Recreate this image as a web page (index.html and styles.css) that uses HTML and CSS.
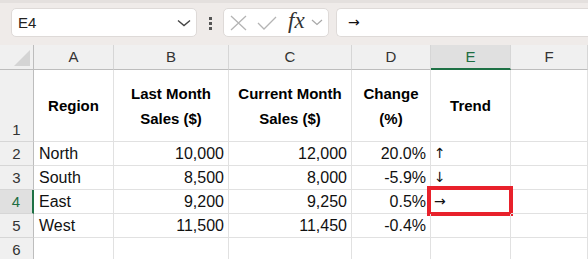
FILE: index.html
```html
<!DOCTYPE html>
<html lang="en">
<head>
<meta charset="utf-8"/>
<title>Sales Trend</title>
<link rel="stylesheet" href="styles.css">
</head>
<body>
<div class="formula-bar">
  <div class="name-box">
    <span>E4</span>
    <svg width="14" height="8" viewBox="0 0 14 8"><path d="M1 1.5 L7 6.5 L13 1.5" fill="none" stroke="#444" stroke-width="1.4"/></svg>
  </div>
  <div class="dots"><i></i><i></i><i></i></div>
  <div class="fx-box">
    <svg width="17" height="16" viewBox="0 0 17 16"><path d="M1 1 L16 15 M16 1 L1 15" stroke="#b4b4b4" stroke-width="1.3"/></svg>
    <svg width="20" height="14" viewBox="0 0 20 14"><path d="M1 7 L7 13 L19 1" fill="none" stroke="#b4b4b4" stroke-width="1.3"/></svg>
    <span class="fx">fx</span>
    <svg width="12" height="7" viewBox="0 0 12 7"><path d="M1 1 L6 5.5 L11 1" fill="none" stroke="#a8a8a8" stroke-width="1.2"/></svg>
  </div>
  <div class="formula-input">→</div>
</div>

<div class="sheet">
  <div class="corner"><span class="tri"></span></div>
  <div class="col-head">A</div>
  <div class="col-head">B</div>
  <div class="col-head">C</div>
  <div class="col-head">D</div>
  <div class="col-head active">E</div>
  <div class="col-head">F</div>

  <div class="row-head tall">1</div>
  <div class="cell head">Region</div>
  <div class="cell head">Last Month<br>Sales ($)</div>
  <div class="cell head">Current Month<br>Sales ($)</div>
  <div class="cell head">Change<br>(%)</div>
  <div class="cell head">Trend</div>
  <div class="cell"></div>

  <div class="row-head">2</div>
  <div class="cell">North</div>
  <div class="cell num">10,000</div>
  <div class="cell num">12,000</div>
  <div class="cell num">20.0%</div>
  <div class="cell arrow">↑</div>
  <div class="cell"></div>

  <div class="row-head">3</div>
  <div class="cell">South</div>
  <div class="cell num">8,500</div>
  <div class="cell num">8,000</div>
  <div class="cell num">-5.9%</div>
  <div class="cell arrow">↓</div>
  <div class="cell"></div>

  <div class="row-head active">4</div>
  <div class="cell">East</div>
  <div class="cell num">9,200</div>
  <div class="cell num">9,250</div>
  <div class="cell num">0.5%</div>
  <div class="cell arrow selected">→<span class="highlight"></span></div>
  <div class="cell"></div>

  <div class="row-head">5</div>
  <div class="cell">West</div>
  <div class="cell num">11,500</div>
  <div class="cell num">11,450</div>
  <div class="cell num">-0.4%</div>
  <div class="cell arrow"></div>
  <div class="cell"></div>

  <div class="row-head">6</div>
  <div class="cell"></div>
  <div class="cell"></div>
  <div class="cell"></div>
  <div class="cell"></div>
  <div class="cell"></div>
  <div class="cell"></div>
</div>
</body>
</html>
```

FILE: styles.css
```css
* {
  box-sizing: border-box;
}

body {
  margin: 0;
  width: 588px;
  height: 259px;
  overflow: hidden;
  font-family: "Liberation Sans", Arial, sans-serif;
  background: #ffffff;
  color: #111;
}

/* formula bar */
.formula-bar {
  height: 45px;
  background: #efebe9;
  border-top: 3px solid #e4e0de;
  padding: 5px 0 0 11px;
  display: flex;
  align-items: flex-start;
  white-space: nowrap;
}

.name-box {
  width: 186px;
  height: 29px;
  background: #fff;
  border: 1px solid #dedad8;
  border-radius: 5px;
  display: flex;
  align-items: center;
  justify-content: space-between;
  padding: 0 5px 0 6px;
  font-size: 15px;
  color: #222;
}

.dots {
  width: 3px;
  margin: 9px 11px 0 12px;
  display: flex;
  flex-direction: column;
  gap: 2px;
}

.dots i {
  display: block;
  width: 3px;
  height: 3px;
  background: #555;
}

.fx-box {
  width: 106px;
  height: 29px;
  background: #fff;
  border: 1px solid #dedad8;
  border-radius: 5px;
  display: flex;
  align-items: center;
  padding: 0 0 0 6px;
}

.fx-box svg:nth-child(1) {
  margin-right: 10px;
}

.fx-box svg:nth-child(2) {
  margin-right: 11px;
}

.fx {
  font-family: "Liberation Serif", "Times New Roman", serif;
  font-style: italic;
  font-size: 23px;
  color: #333;
  margin-right: 6px;
  margin-top: -3px;
}

.formula-input {
  flex: 1;
  height: 29px;
  margin-left: 7px;
  background: #fff;
  border: 1px solid #dedad8;
  border-right: none;
  border-radius: 5px 0 0 5px;
  padding: 4px 0 0 11px;
  font-family: "DejaVu Sans", sans-serif;
  font-size: 14px;
  line-height: 18px;
  color: #111;
}

/* grid */
.sheet {
  display: grid;
  grid-template-columns: 34px 80px 115px 123px 79px 80px 1fr;
  grid-template-rows: 25px 72px 24px 24px 24px 24px 24px;
}

.corner {
  position: relative;
  background: #f0f0f0;
  border-right: 1px solid #bdbdbd;
  border-bottom: 1px solid #bdbdbd;
}

.corner .tri {
  position: absolute;
  right: 3px;
  bottom: 3px;
  width: 0;
  height: 0;
  border-left: 16px solid transparent;
  border-bottom: 16px solid #d4d4d4;
}

.col-head {
  background: #f0f0f0;
  border-right: 1px solid #d6d6d6;
  border-bottom: 1px solid #bdbdbd;
  text-align: center;
  font-size: 15px;
  line-height: 24px;
  color: #333;
}

.col-head.active {
  background: #e0e0e0;
  color: #1e6e42;
  border-bottom: 2px solid #1e7145;
}

.row-head {
  background: #f0f0f0;
  border-right: 1px solid #bdbdbd;
  border-bottom: 1px solid #d6d6d6;
  text-align: center;
  font-size: 15px;
  line-height: 23px;
  color: #333;
}

.row-head.tall {
  display: flex;
  align-items: flex-end;
  justify-content: center;
}

.row-head.active {
  background: #e0e0e0;
  color: #1e6e42;
  border-right: 2px solid #1e7145;
}

.cell {
  position: relative;
  border-right: 1px solid #e1e1e1;
  border-bottom: 1px solid #e1e1e1;
  padding: 0 4px 0 5px;
  font-size: 16px;
  line-height: 23px;
  white-space: nowrap;
  color: #111;
}

.cell.head {
  font-weight: bold;
  font-size: 15px;
  line-height: 25px;
  text-align: center;
  display: flex;
  align-items: center;
  justify-content: center;
  padding: 0;
  color: #000;
}

.cell.num {
  text-align: right;
}

.cell.arrow {
  font-family: "DejaVu Sans", sans-serif;
  font-size: 14px;
  padding-left: 3px;
}

.highlight {
  position: absolute;
  top: -4px;
  left: -4px;
  right: -3px;
  bottom: -3px;
  border: 4px solid #e8212b;
}
```
